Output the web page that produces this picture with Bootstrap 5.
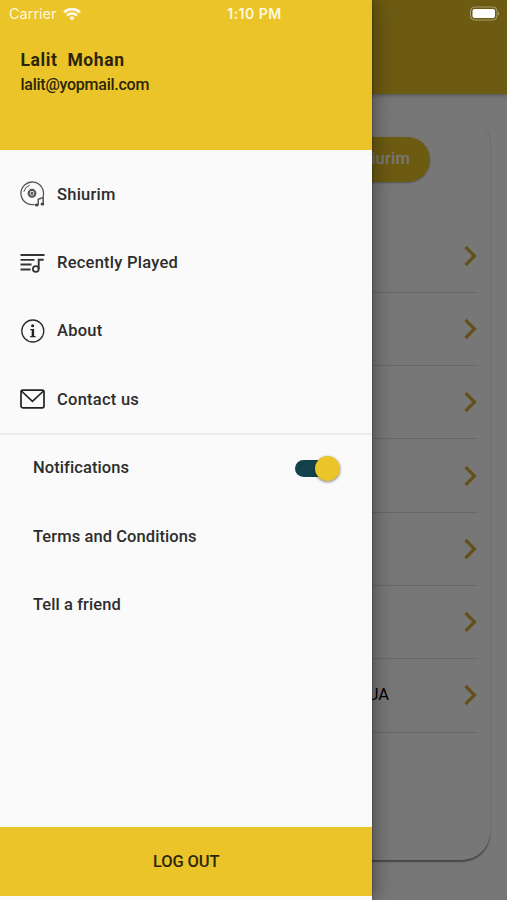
<!DOCTYPE html>
<html lang="en">
<head>
<meta charset="utf-8">
<meta name="viewport" content="width=device-width, initial-scale=1">
<title>Shiurim</title>
<link href="https://cdn.jsdelivr.net/npm/bootstrap@5.3.0/dist/css/bootstrap.min.css" rel="stylesheet">
<style>
  :root { --gold: #eac428; }
  body { font-family: Roboto, "Liberation Sans", sans-serif; color: #2d2d2d; }
  .screen { width: 507px; height: 900px; background: #fff; }
  .app-header { height: 94px; background: var(--gold); box-shadow: 0 1px 4px rgba(0,0,0,.35); }
  .panel { margin: 22px 17px 0; height: 744px; border-radius: 28px; background: #fff; padding: 20.5px 12px 0 28px; box-shadow: 0 1.5px 1.5px rgba(0,0,0,.42); }
  .tab-pill { width: 170px; height: 45px; margin-left: 215px; font-size: 16.5px; font-weight: 500; padding: 1px 20px 0 0; letter-spacing: .2px; background: var(--gold); color: #fff; box-shadow: 0 1px 2px rgba(0,0,0,.3); }
  .track-list { margin-top: 38px; }
  .track { height: 73.3px; padding-right: 1px; border-bottom: 1.5px solid #dedede; font-size: 16.5px; }
  .track span { padding-right: 74px; color: #000; }
  .dim { background: rgba(0,0,0,.535); }
  .drawer { width: 372.4px; background: #fafafa; box-shadow: 0 0 20px rgba(0,0,0,.45), 0 0 2px rgba(0,0,0,.4); }
  .profile { height: 150px; padding: 48.5px 20.5px 0; background: var(--gold); color: #2b2408; }
  .profile-name { font-size: 17.5px; line-height: 22px; font-weight: 700; letter-spacing: .6px; white-space: pre; }
  .profile-mail { font-size: 16px; line-height: 20px; margin-top: 4px; font-weight: 500; letter-spacing: -.25px; }
  .entry { height: 68.4px; font-size: 16.5px; font-weight: 500; letter-spacing: .25px; }
  .menu { padding: 10px 20px 0; height: 284.5px; border-bottom: 2px solid #ececec; }
  .menu .entry { gap: 12px; }
  .menu .entry span { padding-top: 1.6px; }
  .options { padding: 0 32px 0 33px; height: 392.5px; }
  .options .entry { letter-spacing: .08px; }
  .switch { width: 45px; height: 26px; }
  .switch-rail { width: 38px; height: 17px; background: #14424c; }
  .switch-knob { width: 25px; height: 25px; margin-left: -18px; background: var(--gold); box-shadow: 0 1px 3px rgba(0,0,0,.5); }
  .logout { height: 68.5px; padding-top: 9px; background: var(--gold); border-radius: 0; font-size: 16.5px; letter-spacing: -.1px; font-weight: 500; color: #2f270a; }
  .foot { height: 4.5px; background: #fafafa; }
  .status { height: 27px; color: #fff8dc; padding: 0 7px 0 9px; }
  .status-side { width: 120px; gap: 6px; }
  .status-time { font-size: 14px; font-family: Inter, sans-serif; font-weight: 600; letter-spacing: .5px; }
  .carrier { font-family: Inter, sans-serif; font-size: 14.5px; }
</style>
<script src="https://cdn.jsdelivr.net/npm/bootstrap@5.3.0/dist/js/bootstrap.bundle.min.js"></script>
</head>
<body>
<svg class="d-none">
  <symbol id="chev" viewBox="0 0 14 22"><path d="M2.500 2l9 9-9 9" fill="none" stroke="#d9ab3c" stroke-width="3.2"/></symbol>
</svg>
<div class="screen position-relative overflow-hidden">
  <div class="app-header"></div>
  <main class="panel">
    <div class="tab-pill rounded-pill d-flex align-items-center justify-content-end">Shiurim</div>
    <div class="track-list">
      <div class="track d-flex align-items-center justify-content-end"><svg width="14" height="22"><use href="#chev"/></svg></div>
      <div class="track d-flex align-items-center justify-content-end"><svg width="14" height="22"><use href="#chev"/></svg></div>
      <div class="track d-flex align-items-center justify-content-end"><svg width="14" height="22"><use href="#chev"/></svg></div>
      <div class="track d-flex align-items-center justify-content-end"><svg width="14" height="22"><use href="#chev"/></svg></div>
      <div class="track d-flex align-items-center justify-content-end"><svg width="14" height="22"><use href="#chev"/></svg></div>
      <div class="track d-flex align-items-center justify-content-end"><svg width="14" height="22"><use href="#chev"/></svg></div>
      <div class="track d-flex align-items-center justify-content-end"><span>UA</span><svg width="14" height="22"><use href="#chev"/></svg></div>
    </div>
  </main>

  <div class="dim position-absolute top-0 start-0 w-100 h-100"></div>

  <aside class="drawer position-absolute top-0 start-0 h-100 d-flex flex-column">
    <header class="profile">
      <div class="profile-name">Lalit  Mohan</div>
      <div class="profile-mail">lalit@yopmail.com</div>
    </header>
    <nav class="menu">
      <div class="entry d-flex align-items-center">
        <svg width="25" height="26" viewBox="0 0 25 26" fill="none" stroke="#555" stroke-width="1.3">
          <path d="M14.5 23.4A11.3 11.3 0 1 1 23 15.7"/>
          <circle cx="12" cy="12.3" r="3.4" stroke-width="2.1"/><circle cx="12" cy="12.3" r="1"/>
          <path d="M3.8 10.8a9 9 0 0 1 5.9-6.6" stroke-width="1"/>
          <path d="M18.2 24v-5.6l5-1.8v6" stroke-width="1.5"/>
          <ellipse cx="16.7" cy="24" rx="1.9" ry="1.5" fill="#444" stroke="none"/><ellipse cx="22.4" cy="23" rx="1.9" ry="1.5" fill="#444" stroke="none"/>
        </svg>
        <span>Shiurim</span>
      </div>
      <div class="entry d-flex align-items-center">
        <svg width="25" height="20" viewBox="0 0 25 20" fill="none" stroke="#333" stroke-width="1.8">
          <path d="M.5 2h24M.5 6.800h14M.5 11.500h11M.5 16.500h10"/>
          <path d="M18.700 16V6.700h5" stroke-width="1.9"/><circle cx="15.8" cy="16" r="2.9"/>
        </svg>
        <span>Recently Played</span>
      </div>
      <div class="entry d-flex align-items-center">
        <svg width="25" height="24" viewBox="0 0 25 24">
          <circle cx="12.8" cy="12" r="11" fill="none" stroke="#2b2b2b" stroke-width="1.3"/>
          <circle cx="12.6" cy="6.7" r="1.5" fill="#222"/>
          <path d="M10.200 10h3.900v7h1.400v1.200h-5.300V17h1.500v-5.800h-1.500z" fill="#222"/>
        </svg>
        <span>About</span>
      </div>
      <div class="entry d-flex align-items-center">
        <svg width="25" height="20" viewBox="0 0 25 20" fill="none" stroke="#222" stroke-width="1.7">
          <rect x="1" y="1.2" width="23" height="17.6" rx="1.8"/><path d="M1.500 2l10.900 10.300L23.500 2"/>
        </svg>
        <span>Contact us</span>
      </div>
    </nav>
    <div class="options">
      <div class="entry d-flex align-items-center justify-content-between">
        <span>Notifications</span>
        <div class="switch d-flex align-items-center"><div class="switch-rail rounded-pill flex-shrink-0"></div><div class="switch-knob rounded-circle flex-shrink-0"></div></div>
      </div>
      <div class="entry d-flex align-items-center">Terms and Conditions</div>
      <div class="entry d-flex align-items-center">Tell a friend</div>
    </div>
    <button class="logout btn w-100 border-0">LOG OUT</button>
    <div class="foot"></div>
  </aside>

  <div class="status position-absolute top-0 start-0 w-100 d-flex align-items-center justify-content-between">
    <div class="status-side d-flex align-items-center">
      <span class="carrier">Carrier</span>
      <svg width="18" height="14" viewBox="0 0 18 14" fill="none" stroke="#fffbe8" stroke-width="2.7">
        <path d="M1 5.300a11.500 11.500 0 0 1 16 0M4 8.500a7.200 7.200 0 0 1 10 0"/><path d="M9 13.500L6.300 10.900a3.900 3.900 0 0 1 5.400 0z" fill="#fffbe8" stroke="none"/>
      </svg>
    </div>
    <span class="status-time">1:10 PM</span>
    <div class="status-side d-flex justify-content-end">
      <svg width="31" height="15" viewBox="0 0 31 15">
        <rect x="1.5" y="1" width="26.5" height="13" rx="4" fill="none" stroke="#fff" stroke-opacity=".4"/>
        <rect x="3.5" y="3" width="22.5" height="9" rx="2" fill="#fff"/><path d="M29 5.500q2 2 0 4z" fill="#fff" opacity=".5"/>
      </svg>
    </div>
  </div>
</div>
</body>
</html>
